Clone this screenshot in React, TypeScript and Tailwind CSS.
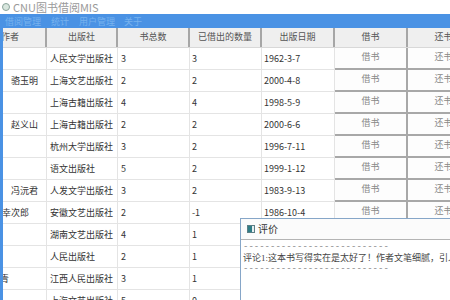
import React from 'react';

const serif = { fontFamily: '"Liberation Serif", "Noto Sans CJK SC", serif' };
const sans = { fontFamily: '"Noto Sans CJK SC", "Liberation Sans", sans-serif' };

const headers = ['作者', '出版社', '书总数', '已借出的数量', '出版日期', '借书', '还书'];

const rows = [
  ['', '人民文学出版社', '3', '3', '1962-3-7'],
  ['骆玉明', '上海文艺出版社', '2', '2', '2000-4-8'],
  ['', '上海古籍出版社', '4', '4', '1998-5-9'],
  ['赵义山', '上海古籍出版社', '2', '2', '2000-6-6'],
  ['', '杭州大学出版社', '3', '2', '1996-7-11'],
  ['', '语文出版社', '5', '2', '1999-1-12'],
  ['冯沅君', '人发文学出版社', '3', '2', '1983-9-13'],
  ['幸次郎', '安徽文艺出版社', '2', '-1', '1986-10-4'],
  ['', '湖南文艺出版社', '4', '1', '1988-3-2'],
  ['', '人民出版社', '2', '1', '1979-6-1'],
  ['青', '江西人民出版社', '3', '1', '1984-5-20'],
  ['', '上海文艺出版社', '5', '0', '1990-2-8'],
];

const cols = 'grid grid-cols-[44px_71px_72px_72px_73px_73px_73px]';

export default function App() {
  return (
    <div className="relative w-[450px] h-[300px] overflow-hidden bg-white flex flex-col" style={sans}>
      {/* 标题栏 */}
      <div className="h-[14px] flex items-center bg-white shrink-0">
        <div className="ml-[2px] w-[8px] h-[8px] rounded-full border border-[#8aa39a] bg-[#d8e6de]" />
        <span className="ml-[3px] text-[11px] leading-none text-[#9a9a9a]">CNU图书借阅MIS</span>
      </div>

      <div className="flex-1 flex flex-col bg-[#4a92e4]">
        {/* 菜单 */}
        <div className="h-[14px] flex items-center text-[9px] leading-none text-[#78b2ee] shrink-0">
          <span className="ml-[5px]">借阅管理</span>
          <span className="ml-[10px]">统计</span>
          <span className="ml-[10px]">用户管理</span>
          <span className="ml-[9px]">关于</span>
        </div>

        {/* 表格 */}
        <div className="flex-1 ml-[3px] bg-white overflow-hidden">
          <div className={`${cols} h-[20px] bg-[#efefef] border-b border-[#d8d8d8]`} style={serif}>
            {headers.map((h, i) => (
              <div
                key={i}
                className={`flex items-center text-[9px] text-[#555] border-r-2 border-[#a6a6a6] whitespace-nowrap overflow-hidden ${i === 0 ? 'justify-start -ml-[2px]' : 'justify-center'}`}
              >
                {h}
              </div>
            ))}
          </div>
          {rows.map((r, ri) => (
            <div key={ri} className={`${cols} h-[22px] text-[9px] text-[#333]`}>
              <div className="flex items-center justify-center border-r border-b border-[#e4e4e4] whitespace-nowrap">
                {ri === 7 ? <span className="-ml-[18px]">{r[0]}</span> : ri === 10 ? <span className="mr-auto -ml-[3px]">{r[0]}</span> : r[0]}
              </div>
              <div className="flex items-center pl-[3px] border-r border-b border-[#e4e4e4] whitespace-nowrap">{r[1]}</div>
              <div className="flex items-center pl-[3px] border-r border-b border-[#e4e4e4]">{r[2]}</div>
              <div className="flex items-center pl-[2px] border-r border-b border-[#e4e4e4]">{r[3]}</div>
              <div className="flex items-center pl-[2px] border-r border-b border-[#e4e4e4]">{r[4]}</div>
              <div className="flex items-center justify-center bg-[#fdfdfd] border-r-2 border-b-2 border-[#a8a8a8] text-[#888]" style={serif}>借书</div>
              <div className="flex items-center justify-center bg-[#fdfdfd] border-r-2 border-b-2 border-[#a8a8a8] text-[#888]" style={serif}>还书</div>
            </div>
          ))}
        </div>
      </div>

      {/* 评价 窗口 */}
      <div className="absolute left-[240px] top-[218px] w-[220px] h-[90px] border border-[#86a6c8] bg-white flex flex-col">
        <div className="h-[21px] flex items-center bg-[#fbfbfb] border-b border-[#b4b4b4] shrink-0">
          <div className="ml-[6px] w-[8px] h-[8px] flex border border-[#5c7f86] bg-[#e6eef0]">
            <div className="w-[4px] h-full bg-[#2f7d86]" />
          </div>
          <span className="ml-[3px] text-[10px] leading-none text-[#333]">评价</span>
        </div>
        <div className="pl-[2px] pt-[2px] text-[9px] leading-[11px] text-[#555] whitespace-nowrap">
          <div style={{ fontFamily: '"Liberation Mono", monospace' }} className="text-[#888]">---------------------------</div>
          <div style={serif} className="text-[#444]">评论1:这本书写得实在是太好了！作者文笔细腻，引人入胜。</div>
          <div style={{ fontFamily: '"Liberation Mono", monospace' }} className="text-[#888]">---------------------------</div>
        </div>
      </div>
    </div>
  );
}
